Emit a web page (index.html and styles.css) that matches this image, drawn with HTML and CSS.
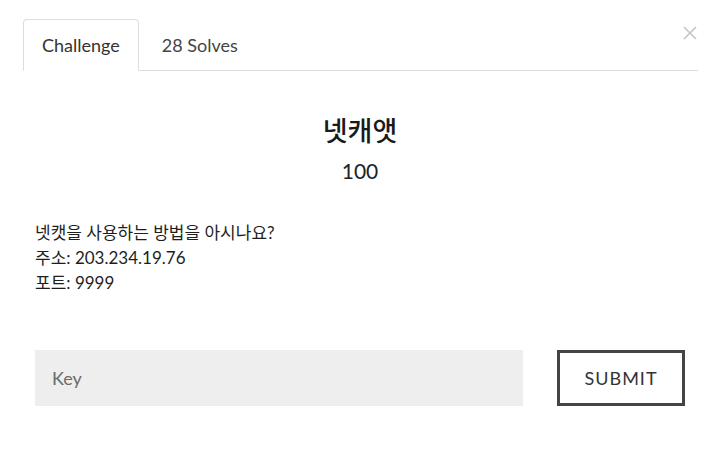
FILE: index.html
```html
<!DOCTYPE html>
<html lang="ko">
<head>
    <meta charset="UTF-8">
    <meta name="viewport" content="width=device-width, initial-scale=1.0">
    <title>넷캐앳</title>
    <link rel="stylesheet" href="styles.css">
</head>
<body>
    <div class="modal">
        <button class="close" aria-label="Close">
            <svg width="14" height="14" viewBox="0 0 14 14">
                <path d="M1 1 L13 13 M13 1 L1 13" stroke="#c4c4c4" stroke-width="1.6" fill="none"/>
            </svg>
        </button>

        <ul class="tabs">
            <li class="tab active">Challenge</li>
            <li class="tab">28 Solves</li>
        </ul>

        <div class="challenge">
            <h2 class="challenge-name">넷캐앳</h2>
            <h3 class="challenge-value">100</h3>

            <div class="challenge-desc">
                <p>넷캣을 사용하는 방법을 아시나요?<br>
                주소: 203.234.19.76<br>
                포트: 9999</p>
            </div>

            <form class="submit-row" onsubmit="return false">
                <input type="text" class="key-input" placeholder="Key">
                <button type="submit" class="submit-btn">SUBMIT</button>
            </form>
        </div>
    </div>
</body>
</html>
```

FILE: styles.css
```css
body {
    margin: 0;
    background: #ffffff;
    color: #222222;
    font-family: Lato, "Noto Sans CJK KR", sans-serif;
}
.modal {
    position: relative;
    padding: 19px 22px 0 23px;
}
.close {
    position: absolute;
    top: 26px;
    right: 23px;
    padding: 0;
    border: none;
    background: none;
    cursor: pointer;
}
.close svg {
    display: block;
}
.tabs {
    display: flex;
    list-style: none;
    margin: 0;
    padding: 0;
    border-bottom: 1px solid #dddddd;
}
.tab {
    height: 50px;
    line-height: 50px;
    padding: 0 18px;
    margin-right: 4px;
    margin-bottom: -1px;
    font-size: 18px;
    color: #444444;
    border: 1px solid transparent;
    border-radius: 4px 4px 0 0;
}
.tab.active {
    color: #333333;
    background: #ffffff;
    border-color: #dddddd;
    border-bottom-color: #ffffff;
}
.challenge {
    padding: 0 13px 0 12px;
}
.challenge-name {
    margin: 42px 0 0;
    text-align: center;
    font-size: 27px;
    font-weight: 500;
    line-height: 36px;
    color: #1a1a1a;
}
.challenge-value {
    margin: 8px 0 0;
    text-align: center;
    font-size: 21px;
    font-weight: 400;
    line-height: 28px;
    color: #222222;
}
.challenge-desc p {
    margin: 35px 0 0;
    font-size: 17px;
    line-height: 25px;
    color: #1e1e1e;
}
.submit-row {
    display: flex;
    justify-content: space-between;
    margin-top: 55px;
}
.key-input {
    width: 488px;
    height: 56px;
    box-sizing: border-box;
    padding: 0 17px;
    border: none;
    background: #eeeeee;
    font-family: Lato, sans-serif;
    font-size: 18px;
    color: #333333;
}
.key-input::placeholder {
    color: #6b6b6b;
}
.submit-btn {
    width: 128px;
    height: 56px;
    border: 3px solid #444444;
    background: #ffffff;
    font-family: Lato, sans-serif;
    font-size: 18px;
    letter-spacing: 1px;
    color: #333333;
    cursor: pointer;
}
```
